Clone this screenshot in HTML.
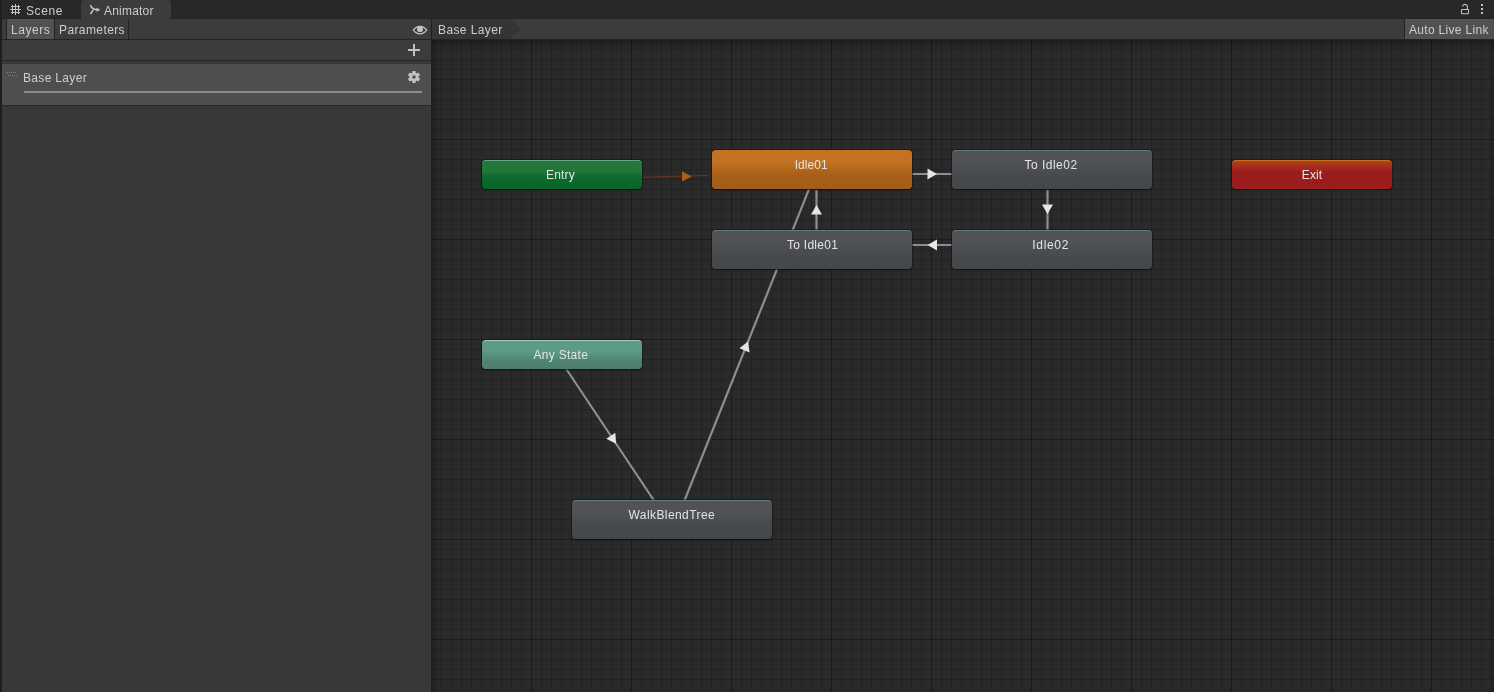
<!DOCTYPE html>
<html><head><meta charset="utf-8"><title>Animator</title>
<style>
html,body{margin:0;padding:0;}
body{width:1494px;height:692px;overflow:hidden;background:#3c3c3c;position:relative;font-family:"Liberation Sans",sans-serif;font-size:12px;color:#cdcdcd;}
.abs{position:absolute;}
.t{position:absolute;will-change:transform;white-space:nowrap;line-height:14px;height:14px;}
#edge{left:0;top:0;width:2px;height:692px;background:#1f1f1f;}
#tabstrip{left:2px;top:0;width:1492px;height:19px;background:#282828;border-top-left-radius:3px;}
#tabA{left:81px;top:0;width:90px;height:19px;background:#3c3c3c;border-radius:3px 3px 0 0;}
#toolbar{left:2px;top:19px;width:1492px;height:20px;background:#3c3c3c;}
#tline{left:2px;top:39px;width:1492px;height:1px;background:#232323;}
#btnLayers{left:7px;top:19px;width:47px;height:20px;background:#505153;}
.vsep{width:1px;height:20px;top:19px;background:#242424;}
#panel{left:2px;top:40px;width:429px;height:652px;background:#383838;}
#plusrow{left:2px;top:40px;width:429px;height:20px;background:#3c3c3c;}
#pborder{left:431px;top:19px;width:1px;height:673px;background:#1e1e1e;}
#l60{left:2px;top:60px;width:429px;height:1px;background:#262626;}
#l61{left:2px;top:61px;width:429px;height:3px;background:#383838;}
#item{left:2px;top:64px;width:429px;height:41px;background:#4d4e50;}
#l104{left:2px;top:105px;width:429px;height:1px;background:#2a2a2a;}
#uline{left:24px;top:91px;width:398px;height:2px;background:#8b8b8b;}
#graph{left:432px;top:40px;width:1062px;height:652px;background-color:#2a2a2a;overflow:hidden;
 background-image:
  linear-gradient(to right,#1b1b1b 1px,transparent 1px),
  linear-gradient(to bottom,#1b1b1b 1px,transparent 1px),
  linear-gradient(to right,#222222 1px,transparent 1px),
  linear-gradient(to bottom,#222222 1px,transparent 1px);
 background-size:100px 100px,100px 100px,10px 10px,10px 10px;
 background-position:99px 0,0 99px,9px 0,0 9px;}
.node{position:absolute;border-radius:4px;box-shadow:0 0 0 1px rgba(20,20,20,.5),0 1px 2px rgba(0,0,0,.5);text-align:center;color:#e4e4e4;}
.node span{position:absolute;will-change:transform;left:0;right:0;white-space:nowrap;line-height:14px;}
.st{width:200px;height:39px;background:linear-gradient(#505255 0%,#505255 28%,#46494c 75%,#45484b 100%);border-top:1px solid #5f7f7c;box-sizing:border-box;}
.st span{top:7px;}
.sm{width:160px;height:29px;box-sizing:border-box;}
.sm span{top:7px;}
</style></head><body>
<div class="abs" id="edge"></div>
<div class="abs" id="tabstrip"></div>
<div class="abs" style="left:2px;top:18px;width:1492px;height:1px;background:#242424"></div>
<div class="abs" id="tabA"></div>
<div class="abs" id="toolbar"></div>
<div class="abs" id="panel"></div><div class="abs" id="plusrow"></div>
<div class="abs" id="btnLayers"></div>
<div class="abs vsep" style="left:6px"></div>
<div class="abs vsep" style="left:54px"></div>
<div class="abs vsep" style="left:128px"></div>
<div class="abs vsep" style="left:1404px"></div>
<div class="abs" style="left:1405px;top:19px;width:89px;height:20px;background:#505153"></div>
<div class="abs" id="tline"></div>
<div class="abs" id="l60"></div><div class="abs" id="l61"></div>
<div class="abs" id="item"></div><div class="abs" id="l104"></div>
<div class="abs" id="uline"></div>
<div class="abs" id="pborder"></div>

<!-- breadcrumb -->
<svg class="abs" style="left:432px;top:19px" width="90" height="20"><polygon points="0,0 77,0 87,10 77,20 0,20" fill="#353535"/><polyline points="77,0 87,10 77,20" fill="none" stroke="#2c2c2c" stroke-width="1"/></svg>

<!-- tab texts -->
<div class="t" id="tScene" style="letter-spacing:0.6px;left:26px;top:4px">Scene</div>
<div class="t" id="tAnimator" style="letter-spacing:0.21px;left:104px;top:4px">Animator</div>
<div class="t" id="tLayers" style="letter-spacing:0.54px;left:11px;top:23px">Layers</div>
<div class="t" id="tParams" style="letter-spacing:0.4px;left:59px;top:23px">Parameters</div>
<div class="t" id="tBread" style="letter-spacing:0.39px;left:437.500px;top:23px">Base Layer</div>
<div class="t" id="tAuto" style="letter-spacing:0.31px;left:1409px;top:23px">Auto Live Link</div>
<div class="t" id="tBase" style="letter-spacing:0.33px;left:23px;top:71px">Base Layer</div>

<!-- icons -->
<svg class="abs" style="left:0;top:0" width="1494" height="110" fill="none" stroke="#c2c2c2">
 <!-- scene grid icon -->
 <g stroke-width="1" stroke="#c4c4c4"><path d="M12.500 5v9M18.500 5v9M15.500 4v11M11 6.500h9M11 12.500h9M10 9.500h11"/></g>
 <!-- animator icon -->
 <g stroke-width="1.5" stroke="#c2c2c2" stroke-linecap="round"><path d="M90.700 5.600Q92.300 9.600 97 9.700M90.800 13.500L92.900 10.300"/></g><polygon points="96.500,7.500 100.200,9.700 96.500,11.900" fill="#c2c2c2" stroke="none"/>
 <!-- lock -->
 <g stroke-width="1.100"><rect x="1461.500" y="9.500" width="7" height="4.200" rx="0.500"/><path d="M1467.400 9.500V7.200a2.400 2.400 0 0 0 -4.800 -0.700"/></g>
 <!-- kebab -->
 <g fill="#c2c2c2" stroke="none"><rect x="1481" y="4" width="2" height="2"/><rect x="1481" y="8" width="2" height="2"/><rect x="1481" y="12" width="2" height="2"/></g>
 <!-- eye -->
 <g stroke-width="1.200"><path d="M413.400 30.100C415.500 27 417.800 26.300 420 26.300S424.500 27 426.700 30.100C424.500 33 422.200 33.800 420 33.800S415.500 33 413.400 30.100z"/><circle cx="420" cy="29.200" r="3" fill="#c2c2c2" stroke="none"/></g>
 <!-- plus -->
 <g fill="#c2c2c2" stroke="none"><rect x="408" y="49" width="12" height="2"/><rect x="413" y="44" width="2" height="12"/></g>
 <!-- gear -->
 <g transform="translate(414 77)"><circle r="3.200" stroke-width="2.800"/><g stroke-width="3.200"><path d="M0 -6.100V-4M0 6.100V4M-5.280 -3.050L-3.460 -2M5.280 3.050L3.460 2M-5.280 3.050L-3.460 2M5.280 -3.050L3.460 -2"/></g></g>
 <!-- drag dots -->
 <g fill="#5f8d88" stroke="none">
  <rect x="7" y="72" width="1" height="1"/><rect x="9" y="72" width="1" height="1"/><rect x="11" y="72" width="1" height="1"/><rect x="13" y="72" width="1" height="1"/><rect x="15" y="72" width="1" height="1"/>
  <rect x="8" y="75" width="1" height="1"/><rect x="10" y="75" width="1" height="1"/><rect x="12" y="75" width="1" height="1"/><rect x="14" y="75" width="1" height="1"/><rect x="16" y="75" width="1" height="1"/>
 </g>
</svg>

<div class="abs" id="graph">
 <svg class="abs" style="left:-432px;top:-40px" width="1494" height="692">
  <g stroke="#8a8f8f" stroke-width="2.200" fill="none" stroke-linecap="butt">
   <line x1="816.2" y1="171.2" x2="676.2" y2="521.2"/>
   <line x1="558.3" y1="357" x2="668.3" y2="522"/>
   <line x1="816.500" y1="190" x2="816.500" y2="230"/>
   <line x1="1047.500" y1="190" x2="1047.500" y2="230"/>
   <line x1="912" y1="174" x2="952" y2="174"/>
   <line x1="912" y1="245" x2="952" y2="245"/>
  </g>
  <line x1="642" y1="177.300" x2="708" y2="175.400" stroke="#6e3322" stroke-width="1"/>
  <polygon points="682,171.500 692,176.500 682,181.500" fill="#a86018"/>
  <g fill="#e6e6e6">
   <polygon points="816.500,205 822,214.500 811,214.500"/>
   <polygon points="1047.500,214 1042,204.500 1053,204.500"/>
   <polygon points="937,174 927.500,179.500 927.500,168.500"/>
   <polygon points="927.500,245 937,239.500 937,250.500"/>
   <g transform="translate(746.200 346.200) rotate(-68.200)"><polygon points="5,0 -4.500,5.500 -4.500,-5.500"/></g>
   <g transform="translate(613.300 439.500) rotate(56.300)"><polygon points="5,0 -4.500,5.500 -4.500,-5.500"/></g>
  </g>
 </svg>
 <div class="node sm" style="left:50px;top:120px;background:linear-gradient(#23773a 0%,#23773a 35%,#0a6a2c 60%,#076428 100%);border-top:1px solid #6aa58a"><span style="letter-spacing:0.15px;margin-left:-2.85px">Entry</span></div>
 <div class="node st" style="left:280px;top:110px;background:linear-gradient(#c27222 0%,#c27222 30%,#a75e18 65%,#a55c18 100%);border-top:1px solid #c27222"><span style="letter-spacing:0.08px;margin-left:-0.52px">Idle01</span></div>
 <div class="node st" style="left:520px;top:110px"><span style="letter-spacing:0.5px;margin-left:-2.10px">To Idle02</span></div>
 <div class="node st" style="left:280px;top:190px"><span style="letter-spacing:0.27px;margin-left:0.87px">To Idle01</span></div>
 <div class="node st" style="left:520px;top:190px"><span style="letter-spacing:0.68px;margin-left:-3.32px">Idle02</span></div>
 <div class="node sm" style="left:800px;top:120px;background:linear-gradient(#b2401e 0%,#a82e1d 20%,#9b1c1c 40%,#9b1c1c 100%);border-top:1px solid #c4701e"><span style="letter-spacing:0.07px;margin-left:0.07px">Exit</span></div>
 <div class="node sm" style="left:50px;top:300px;background:linear-gradient(#5d9b87 0%,#5d9b87 35%,#508373 70%,#4e7f70 100%);border-top:1px solid #a6cfc4"><span style="letter-spacing:0.3px;margin-left:-1.70px">Any State</span></div>
 <div class="node st" style="left:140px;top:460px"><span style="letter-spacing:0.42px;margin-left:0.42px">WalkBlendTree</span></div>
<div class="abs" style="left:0;top:0;width:1062px;height:10px;background:linear-gradient(rgba(0,0,0,.28),rgba(0,0,0,.12) 60%,rgba(0,0,0,0))"></div><div class="abs" style="left:0;top:0;width:10px;height:652px;background:linear-gradient(to right,rgba(0,0,0,.22),rgba(0,0,0,.06) 55%,rgba(0,0,0,0))"></div><div class="abs" style="right:0;top:0;width:5px;height:652px;background:linear-gradient(to left,rgba(0,0,0,.22),rgba(0,0,0,0))"></div>
</div>
</body></html>
